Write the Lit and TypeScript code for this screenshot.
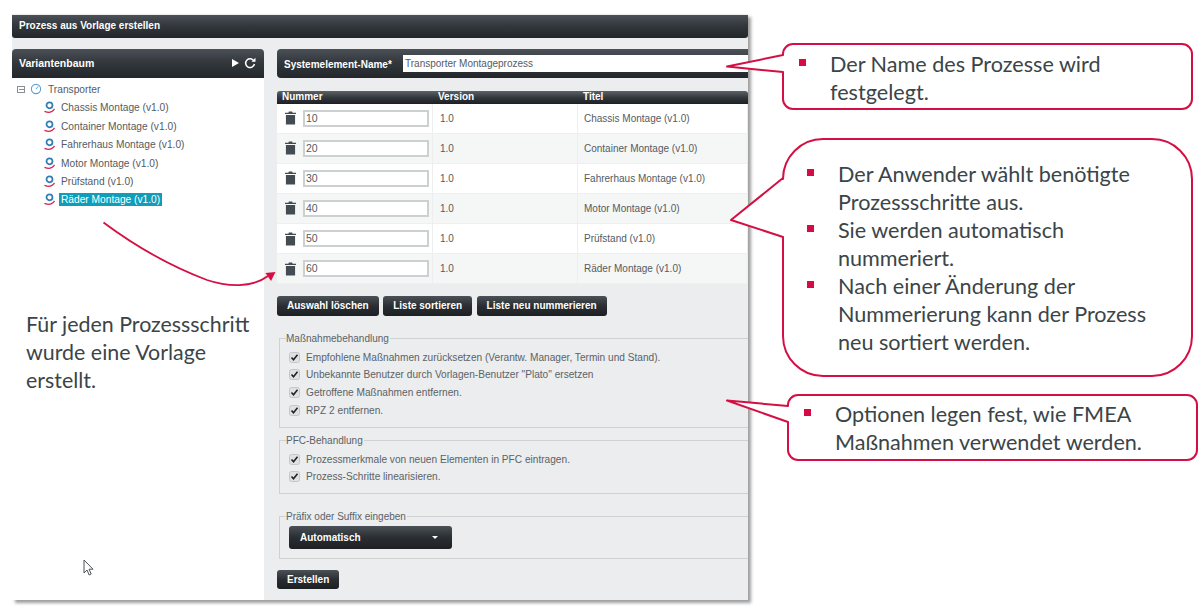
import { LitElement, html, css, svg } from "lit";
import { customElement } from "lit/decorators.js";

const trash = html`<svg class="trash" viewBox="0 0 12 14" width="11" height="14"><path d="M4.200 0h3.600l.5 1.200H12v1.400H0V1.200h3.700zM1 3.600h10V14H1z" fill="#434c52"/></svg>`;
const procIcon = html`<svg class="pi" viewBox="0 0 12 13" width="12" height="13"><circle cx="5.500" cy="4.300" r="3" fill="none" stroke="#2f7db8" stroke-width="1.700"/><path d="M.5 10.300c3 1.300 6.500 1.200 8-.2 1-.8 1.500-1.500 2-2.300" fill="none" stroke="#d9204f" stroke-width="1.300"/></svg>`;
const check = html`<svg class="cb" viewBox="0 0 11 11" width="11" height="11"><rect x=".5" y=".5" width="10" height="10" rx="2" fill="#dfe1e2" stroke="#c4c7c9"/><path d="M2.500 5.500l2 2.200 4-5" fill="none" stroke="#1f2326" stroke-width="1.600"/></svg>`;

const treeItems = ["Chassis Montage (v1.0)", "Container Montage (v1.0)", "Fahrerhaus Montage (v1.0)", "Motor Montage (v1.0)", "Prüfstand (v1.0)"];
const rows = [
  ["10", "Chassis Montage (v1.0)"],
  ["20", "Container Montage (v1.0)"],
  ["30", "Fahrerhaus Montage (v1.0)"],
  ["40", "Motor Montage (v1.0)"],
  ["50", "Prüfstand (v1.0)"],
  ["60", "Räder Montage (v1.0)"],
];

@customElement("app-root")
export class AppRoot extends LitElement {
  static styles = css`
    :host { display: block; width: 1200px; height: 614px; overflow: hidden; background: #fff; font-family: "Liberation Sans", Arial, sans-serif; }
    .page { position: relative; width: 1200px; height: 614px; padding: 14px 0 0 12px; box-sizing: border-box; }
    .win { width: 736px; height: 586px; display: flex; flex-direction: column; overflow: hidden; background: #ebedee; box-shadow: 3px 3px 3px rgba(0,0,0,.38); position: relative; }
    .bar { background: linear-gradient(#4b5157, #33383d 45%, #23272b); color: #fff; font-weight: bold; }
    .title { height: 23px; margin-top: 1px; flex: none; display: flex; align-items: center; padding: 0 0 2px 7px; box-sizing: border-box; font-size: 10px; border-radius: 0 0 3px 3px; }
    .main { flex: 1; display: flex; min-height: 0; }
    .left { width: 252px; flex: none; margin-top: 11px; display: flex; flex-direction: column; }
    .lhead { height: 29px; flex: none; border-radius: 4px 4px 0 0; display: flex; align-items: center; padding: 0 8px 2px 7px; box-sizing: border-box; font-size: 10.500px; justify-content: space-between; }
    .lhead .ctl { display: flex; align-items: center; gap: 5px; }
    .tree { flex: 1; background: #fff; position: relative; padding: 2.300px 0 0 5px; color: #555b61; font-size: 10.200px; }
    .tnode { height: 18.400px; display: flex; align-items: center; }
    .root-node .minus { width: 8px; height: 7px; border: 1px solid #8a8f93; box-sizing: border-box; margin-right: 5px; background: linear-gradient(#8a8f93,#8a8f93) center/5px 1px no-repeat; }
    .root-node svg { margin-right: 6px; }
    .leaf { padding-left: 27px; }
    .leaf .pi { margin-right: 5px; }
    .sel { background: #0f9dba; color: #fff; padding: 1px 2px; margin-left: -2px; }
    .cursor { position: absolute; left: 71px; top: 481px; }
    .right { flex: 1; min-width: 0; padding: 11px 0 0 13px; display: flex; flex-direction: column; }
    .sys { height: 29px; flex: none; border-radius: 4px 0 0 4px; display: flex; align-items: center; padding-left: 7px; font-size: 10px; }
    .sys .lab { width: 119px; flex: none; padding-top: 1px; }
    .sys .inp { flex: 1; height: 17px; background: #fff; color: #555b61; font-weight: normal; font-size: 10px; line-height: 18px; padding-left: 2px; box-sizing: border-box; }
    .thead { margin-top: 13px; height: 12.500px; flex: none; display: grid; grid-template-columns: 156px 145px 1fr; font-size: 10px; line-height: 12px; border-radius: 3px 3px 0 0; background: linear-gradient(#5c6268, #33383d 50%, #1c1f22); }
    .thead div { padding-left: 5px; }
    .row { height: 30.150px; display: grid; grid-template-columns: 156px 145px 1fr; background: #fff; color: #555b61; font-size: 10px; border-bottom: 1px solid #eef0f0; box-sizing: border-box; }
    .row:nth-child(even) { background: #f5f6f6; }
    .row > div { display: flex; align-items: center; border-right: 1px solid #eceeef; padding-left: 6px; }
    .row > div:first-child { padding-left: 8px; }
    .row > div:nth-child(2) { padding-left: 7px; }
    .row .trash { margin-right: 7px; }
    .row .num { width: 126px; height: 17px; border: 2px solid #cdd0d1; background: #fff; box-sizing: border-box; line-height: 13px; padding-left: 1px; font-size: 10.500px; }
    .btns { display: flex; gap: 4.500px; margin-top: 12px; flex: none; }
    .btn { height: 20px; padding: 0 10px; border-radius: 3px; font-size: 10px; line-height: 20px; background: linear-gradient(#4b5157, #2a2e32 50%, #1d2023); }
    fieldset { margin: 0 -12px 0 2px; padding: 0 0 0 9px; border: 1px solid #cfd2d3; color: #5c6267; font-size: 10px; flex: none; min-width: 0; }
    legend { padding: 0 1px 0 0; margin-left: -3px; font-size: 10px; line-height: 12px; }
    .f1 { margin-top: 16.500px; height: 93px; }
    .f2 { margin-top: 7px; height: 57px; }
    .f3 { margin-top: 17px; height: 46px; }
    .opt { display: flex; align-items: center; height: 17.700px; font-size: 10.150px; white-space: nowrap; }
    .cb { margin-right: 6px; flex: none; }
    .opts { padding-top: 3.500px; }
    .combo { width: 163px; height: 23px; margin-top: 3px; border-radius: 3px; display: flex; align-items: center; justify-content: space-between; padding: 0 14px 0 11px; box-sizing: border-box; font-size: 10px; background: linear-gradient(#4b5157, #2a2e32 50%, #1d2023); }
    .caret { width: 0; height: 0; border: 3px solid transparent; border-top: 3px solid #fff; border-bottom: 0; }
    .create { align-self: flex-start; margin-top: 11px; height: 19px; line-height: 19px; }
    .over { position: absolute; left: 0; top: 0; pointer-events: none; }
    .note { position: absolute; font-family: "Lato", "Open Sans", sans-serif; font-size: 21.600px; line-height: 28px; color: #3b4548; }
    .note ul { list-style: none; margin: 0; padding: 0; }
    .note li { position: relative; padding-left: 40px; }
    .note li::before { content: ""; position: absolute; left: 9px; top: 9px; width: 7px; height: 7px; background: #d60b45; }
    .n1 { left: 790px; top: 50px; width: 320px; }
    .n2 { left: 798px; top: 160px; width: 360px; }
    .n3 { left: 795px; top: 400px; width: 395px; }
    .free { left: 26px; top: 310px; width: 235px; font-size: 21.400px; }
  `;

  render() {
    return html`<div class="page">
      <div class="win">
        <div class="bar title">Prozess aus Vorlage erstellen</div>
        <div class="main">
          <div class="left">
            <div class="bar lhead"><span>Variantenbaum</span>
              <span class="ctl">
                <svg viewBox="0 0 7 8" width="7" height="8"><path d="M0 0l7 4-7 4z" fill="#fff"/></svg>
                <svg viewBox="0 0 12 12" width="12" height="12"><path d="M10 4.200A4.400 4.400 0 1 0 10.400 7" fill="none" stroke="#fff" stroke-width="1.500"/><path d="M7.500 4.800h4v-4z" fill="#fff"/></svg>
              </span>
            </div>
            <div class="tree">
              <div class="tnode root-node"><span class="minus"></span>
                <svg viewBox="0 0 12 12" width="12" height="12"><circle cx="6" cy="6" r="4.600" fill="none" stroke="#5c9fd2" stroke-width="1.100"/><path d="M6 6l2.200-2.700" stroke="#5c9fd2" fill="none"/></svg>
                <span>Transporter</span></div>
              ${treeItems.map((t) => html`<div class="tnode leaf">${procIcon}<span>${t}</span></div>`)}
              <div class="tnode leaf">${procIcon}<span class="sel">Räder Montage (v1.0)</span></div>
              <svg class="cursor" viewBox="0 0 11 17" width="11" height="17"><path d="M1 1v13l3-3 2.200 5 2-1-2.200-4.800h4z" fill="#fff" stroke="#4d5357" stroke-width="1"/></svg>
            </div>
          </div>
          <div class="right">
            <div class="bar sys"><span class="lab">Systemelement-Name*</span><span class="inp">Transporter Montageprozess</span></div>
            <div class="bar thead"><div>Nummer</div><div>Version</div><div>Titel</div></div>
            <div>
              ${rows.map(([n, t]) => html`<div class="row"><div>${trash}<span class="num">${n}</span></div><div>1.0</div><div>${t}</div></div>`)}
            </div>
            <div class="btns">
              <span class="bar btn">Auswahl löschen</span><span class="bar btn">Liste sortieren</span><span class="bar btn">Liste neu nummerieren</span>
            </div>
            <fieldset class="f1"><legend>Maßnahmebehandlung</legend><div class="opts">
              <div class="opt">${check}Empfohlene Maßnahmen zurücksetzen (Verantw. Manager, Termin und Stand).</div>
              <div class="opt">${check}Unbekannte Benutzer durch Vorlagen-Benutzer "Plato" ersetzen</div>
              <div class="opt">${check}Getroffene Maßnahmen entfernen.</div>
              <div class="opt">${check}RPZ 2 entfernen.</div>
            </div></fieldset>
            <fieldset class="f2"><legend>PFC-Behandlung</legend><div class="opts">
              <div class="opt">${check}Prozessmerkmale von neuen Elementen in PFC eintragen.</div>
              <div class="opt">${check}Prozess-Schritte linearisieren.</div>
            </div></fieldset>
            <fieldset class="f3"><legend>Präfix oder Suffix eingeben</legend>
              <div class="bar combo"><span>Automatisch</span><span class="caret"></span></div>
            </fieldset>
            <span class="bar btn create">Erstellen</span>
          </div>
        </div>
      </div>
      <svg class="over" width="1200" height="614" viewBox="0 0 1200 614">
        ${svg`
        <g fill="#fff" stroke="#d40f44" stroke-width="2" stroke-linejoin="round">
          <path d="M793 44H1182a10 10 0 0 1 10 10V99a10 10 0 0 1-10 10H793a10 10 0 0 1-10-10V72L727 66.500 783 55V54a10 10 0 0 1 10-10z"/>
          <path d="M823 139H1152a40 40 0 0 1 40 40V336a40 40 0 0 1-40 40H823a40 40 0 0 1-40-40V237L731 220 783 178V179a40 40 0 0 1 40-40z"/>
          <path d="M798 395H1187a10 10 0 0 1 10 10V450a10 10 0 0 1-10 10H798a10 10 0 0 1-10-10V422L727 400.500 788 406V405a10 10 0 0 1 10-10z"/>
        </g>
        <path d="M103.500 222.500C135 246 170 266 207 280 228 287 252 288 268 276" fill="none" stroke="#d40f44" stroke-width="1.800"/>
        <path d="M275.500 272L265.500 273 271 281z" fill="#d40f44"/>
        `}
      </svg>
      <div class="note n1"><ul><li>Der Name des Prozesse wird festgelegt.</li></ul></div>
      <div class="note n2"><ul>
        <li>Der Anwender wählt benötigte Prozessschritte aus.</li>
        <li>Sie werden automatisch nummeriert.</li>
        <li>Nach einer Änderung der Nummerierung kann der Prozess neu sortiert werden.</li>
      </ul></div>
      <div class="note n3"><ul><li>Optionen legen fest, wie FMEA Maßnahmen verwendet werden.</li></ul></div>
      <div class="note free">Für jeden Prozessschritt wurde eine Vorlage erstellt.</div>
    </div>`;
  }
}
